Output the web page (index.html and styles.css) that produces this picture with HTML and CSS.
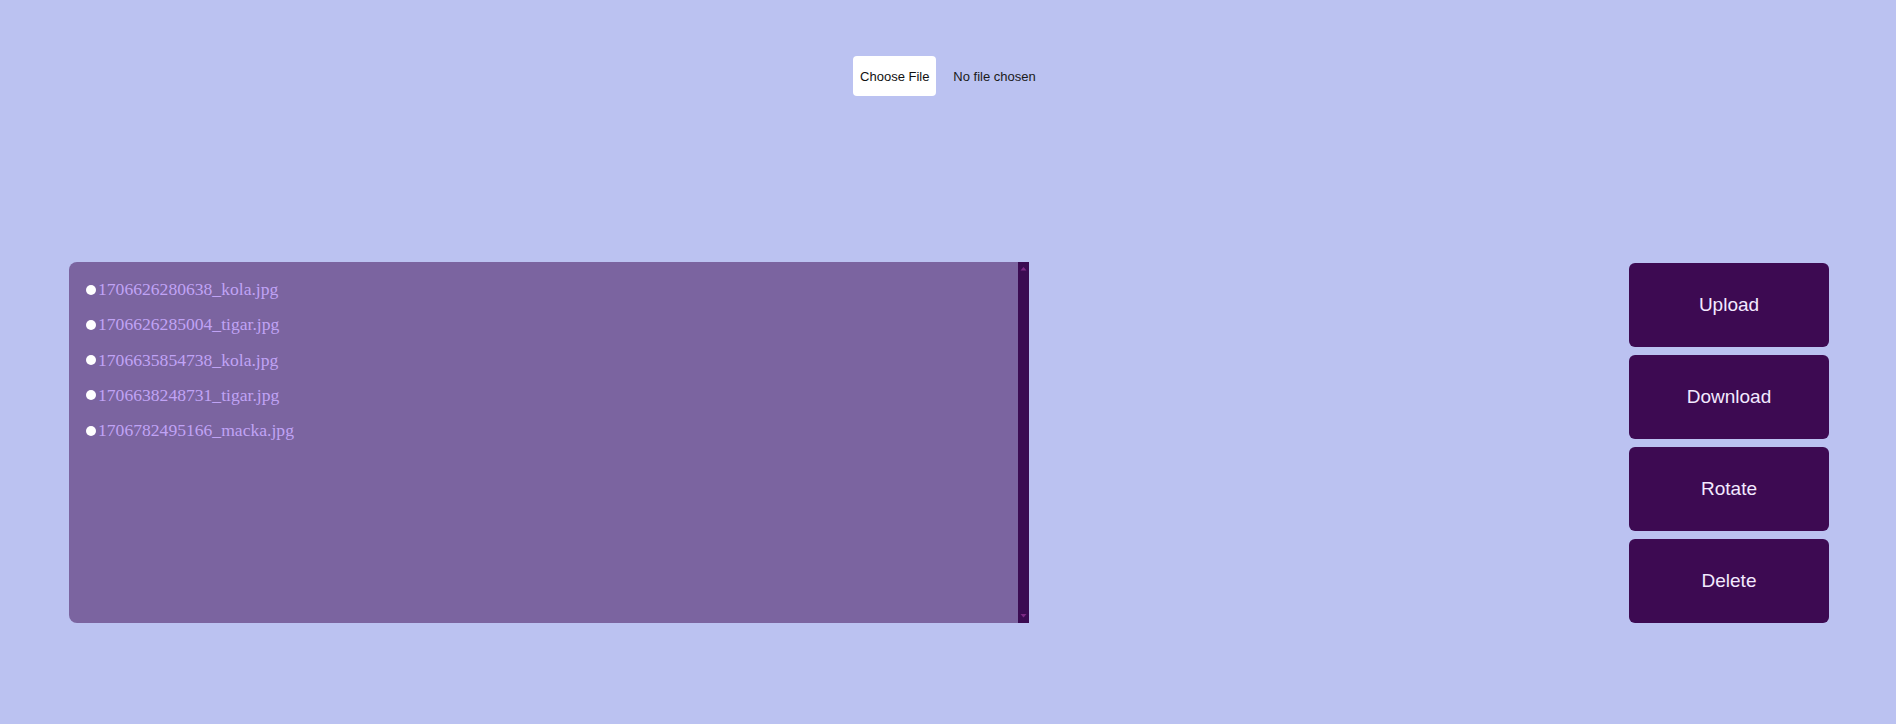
FILE: index.html
```html
<!DOCTYPE html>
<html lang="en">
<head>
<meta charset="utf-8">
<title>Files</title>
<link rel="stylesheet" href="styles.css">
</head>
<body>
  <header class="top">
    <label class="file-picker">
      <input type="file" class="file-input">
      <span class="file-btn">Choose File</span>
      <span class="file-name">No file chosen</span>
    </label>
  </header>
  <main class="main">
    <section class="panel">
      <ul class="file-list">
        <li class="file-item"><span class="dot"></span>1706626280638_kola.jpg</li>
        <li class="file-item"><span class="dot"></span>1706626285004_tigar.jpg</li>
        <li class="file-item"><span class="dot"></span>1706635854738_kola.jpg</li>
        <li class="file-item"><span class="dot"></span>1706638248731_tigar.jpg</li>
        <li class="file-item"><span class="dot"></span>1706782495166_macka.jpg</li>
      </ul>
      <div class="scrollbar">
        <svg class="arrow" width="11" height="11" viewBox="0 0 11 11"><polygon points="2.5,7.5 5.5,4 8.5,7.5" fill="#7c2a84"/></svg>
        <svg class="arrow" width="11" height="11" viewBox="0 0 11 11"><polygon points="2.5,4 5.5,7.5 8.5,4" fill="#7c2a84"/></svg>
      </div>
    </section>
    <nav class="actions">
      <button class="action">Upload</button>
      <button class="action">Download</button>
      <button class="action">Rotate</button>
      <button class="action">Delete</button>
    </nav>
  </main>
</body>
</html>
```

FILE: styles.css
```css
html, body {
  margin: 0;
  padding: 0;
}
body {
  background: #bbc2f1;
  width: 1896px;
  height: 724px;
  overflow: hidden;
  font-family: "Liberation Sans", Arial, sans-serif;
}
.top {
  display: flex;
  justify-content: center;
  padding-top: 56px;
  height: 262px;
  box-sizing: border-box;
}
.file-picker {
  display: flex;
  align-items: center;
  height: 40px;
  margin-left: -7px;
  cursor: pointer;
}
.file-input {
  display: none;
}
.file-btn {
  display: flex;
  align-items: center;
  justify-content: center;
  width: 83px;
  height: 40px;
  background: #ffffff;
  border-radius: 4px;
  font-size: 13px;
  color: #111;
}
.file-name {
  margin-left: 17px;
  font-size: 13px;
  color: #1a1a1a;
}
.main {
  display: flex;
  justify-content: space-between;
  align-items: flex-start;
  padding: 0 67px 0 69px;
}
.panel {
  display: flex;
  width: 960px;
  height: 361px;
  background: #7b64a0;
  border-radius: 8px 0 0 8px;
}
.file-list {
  flex: 1;
  list-style: none;
  margin: 0;
  padding: 10px 0 0 17px;
}
.file-item {
  display: flex;
  align-items: center;
  height: 35.25px;
  font-family: "Liberation Serif", "Times New Roman", serif;
  font-size: 17.6px;
  color: #c0a3f5;
}
.dot {
  width: 10px;
  height: 10px;
  border-radius: 50%;
  background: #ffffff;
  margin-right: 2px;
  flex: none;
}
.scrollbar {
  width: 11px;
  background: #3b0b52;
  display: flex;
  flex-direction: column;
  justify-content: space-between;
  padding: 1px 0 2px;
}
.arrow {
  display: block;
}
.actions {
  display: flex;
  flex-direction: column;
  gap: 8px;
  padding-top: 1px;
}
.action {
  width: 200px;
  height: 84px;
  border: none;
  border-radius: 6px;
  background: #3d0a52;
  color: #f3e9ff;
  font-family: "Liberation Sans", Arial, sans-serif;
  font-size: 19px;
  cursor: pointer;
}
```
